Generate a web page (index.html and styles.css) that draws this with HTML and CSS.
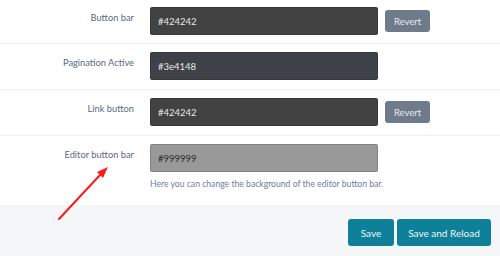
FILE: index.html
```html
<!DOCTYPE html>
<html>
<head>
<meta charset="utf-8">
<link rel="stylesheet" href="styles.css">
</head>
<body>
<div class="page">
  <div class="form">
    <div class="row first">
      <label class="label">Button bar</label>
      <div class="field">
        <div class="control">
          <input class="input dark" type="text" value="#424242">
          <button class="revert">Revert</button>
        </div>
      </div>
    </div>
    <div class="row">
      <label class="label">Pagination Active</label>
      <div class="field">
        <div class="control">
          <input class="input slate" type="text" value="#3e4148">
        </div>
      </div>
    </div>
    <div class="row">
      <label class="label">Link button</label>
      <div class="field">
        <div class="control">
          <input class="input dark" type="text" value="#424242">
          <button class="revert">Revert</button>
        </div>
      </div>
    </div>
    <div class="row last">
      <label class="label">Editor button bar</label>
      <div class="field">
        <div class="control">
          <input class="input grey" type="text" value="#999999">
        </div>
        <p class="help">Here you can change the background of the editor button bar.</p>
      </div>
    </div>
  </div>
  <div class="footer">
    <button class="btn save">Save</button>
    <button class="btn reload">Save and Reload</button>
  </div>
  <svg class="arrow" width="500" height="256" viewBox="0 0 500 256">
    <line x1="59" y1="219" x2="100" y2="175" stroke="#ff1a1a" stroke-width="2" stroke-linecap="round"/>
    <polygon points="108,167 97,172 103,178" fill="#ff1a1a"/>
  </svg>
</div>
</body>
</html>
```
FILE: styles.css
```css
html, body {
  margin: 0;
  padding: 0;
  background: #ffffff;
}
body {
  font-family: Lato, "Open Sans", sans-serif;
  font-size: 9.5px;
}
.page {
  position: relative;
  width: 500px;
  height: 256px;
  overflow: hidden;
}
.form {
  display: flex;
  flex-direction: column;
}
.row {
  display: flex;
  align-items: flex-start;
  padding: 8px 0 9px;
  border-bottom: 1px solid #eef0f3;
}
.row.first {
  padding-top: 7px;
  padding-bottom: 8px;
}
.row.last {
  border-bottom: none;
  padding-bottom: 15px;
}
.label {
  width: 134px;
  margin-right: 16px;
  text-align: right;
  color: #5b6886;
  font-size: 9.3px;
  line-height: 12px;
  padding-top: 5px;
}
.field {
  display: flex;
  flex-direction: column;
}
.control {
  display: flex;
  align-items: center;
}
.input {
  box-sizing: border-box;
  width: 228px;
  height: 28px;
  margin: 0;
  border: 1px solid rgba(0,0,0,0.15);
  border-radius: 2px;
  padding: 0 7px;
  font-family: Lato, "Open Sans", sans-serif;
  font-size: 9.5px;
  outline: none;
}
.input.dark {
  background: #424242;
  color: #e8e8e8;
}
.input.slate {
  background: #3e4148;
  color: #e8e8e8;
}
.input.grey {
  background: #999999;
  color: #2a2a2a;
}
.revert {
  margin-left: 7px;
  width: 45px;
  height: 22px;
  border: none;
  border-radius: 3px;
  background: #6f7b8b;
  color: #e6e9ee;
  font-family: Lato, "Open Sans", sans-serif;
  font-size: 9.5px;
  padding: 0;
}
.help {
  margin: 6px 0 0;
  color: #6d7dab;
  font-size: 8.65px;
  line-height: 12px;
}
.footer {
  display: flex;
  justify-content: flex-end;
  gap: 3px;
  background: #f5f6f8;
  padding: 14px 9px 10px 0;
  height: 52px;
  box-sizing: border-box;
}
.btn {
  height: 27px;
  border: none;
  border-radius: 3px;
  background: #0f8099;
  color: #eef6f8;
  font-family: Lato, "Open Sans", sans-serif;
  font-size: 10px;
  padding: 0;
}
.btn.save {
  width: 46px;
}
.btn.reload {
  width: 94px;
}
.arrow {
  position: absolute;
  left: 0;
  top: 0;
  pointer-events: none;
}
```
